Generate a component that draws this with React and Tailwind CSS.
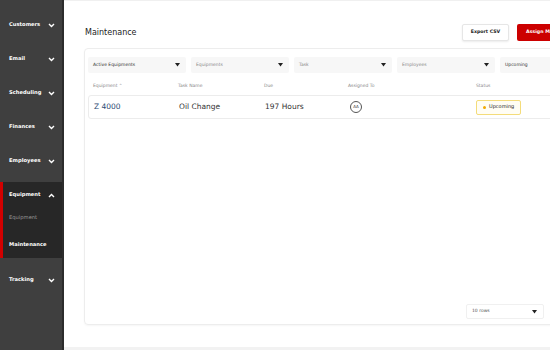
import React from "react";

const sans = { fontFamily: '"DejaVu Sans", Verdana, sans-serif' };

function Chevron({ up = false }) {
  return (
    <svg width="7" height="5" viewBox="0 0 7 5" className="shrink-0">
      <polyline
        points={up ? "1,4 3.5,1.5 6,4" : "1,1 3.5,3.5 6,1"}
        fill="none"
        stroke="#fff"
        strokeWidth="1.4"
      />
    </svg>
  );
}

function Caret() {
  return (
    <svg width="5" height="4" viewBox="0 0 5 4" className="shrink-0">
      <polygon points="0,0 5,0 2.5,3.5" fill="#222" />
    </svg>
  );
}

function NavItem({ label }) {
  return (
    <div className="flex h-[34px] items-center justify-between pl-[9px] pr-[7px]">
      <span className="text-[5.2px] font-bold text-white">{label}</span>
      <Chevron />
    </div>
  );
}

function Filter({ label, dark }) {
  return (
    <div className="flex h-[16px] w-[98px] shrink-0 items-center justify-between rounded-[2px] bg-[#f7f7f7] pl-[5px] pr-[6px]">
      <span className={`text-[4.5px] ${dark ? "text-[#333]" : "text-[#888]"}`}>{label}</span>
      <Caret />
    </div>
  );
}

export default function App() {
  const menu = ["Customers", "Email", "Scheduling", "Finances", "Employees"];

  return (
    <div className="flex h-[350px] w-[550px] overflow-hidden bg-white" style={sans}>
      <aside className="flex h-full w-[64px] shrink-0 flex-col border-r-2 border-[#2c2c2c] bg-[#3f3f3f] pt-[8px]">
        {menu.map((item) => (
          <NavItem key={item} label={item} />
        ))}
        <div className="mt-[4px] border-l-[3px] border-[#d10000] bg-[#272727]">
          <div className="flex h-[25px] items-center justify-between pl-[6px] pr-[7px] pt-[1px]">
            <span className="text-[5.2px] font-bold text-white">Equipment</span>
            <Chevron up />
          </div>
          <div className="flex h-[22px] items-center pl-[6px]">
            <span className="text-[5.2px] text-[#9a9a9a]">Equipment</span>
          </div>
          <div className="flex h-[29px] items-center pl-[6px] pt-[3px]">
            <span className="text-[5.2px] font-bold text-white">Maintenance</span>
          </div>
        </div>
        <div className="mt-[5px]">
          <NavItem label="Tracking" />
        </div>
      </aside>

      <main className="relative min-w-0 flex-1 overflow-hidden border-t border-[#f0f0f0]">
        <div className="w-[560px] pl-[20px]">
          <div className="mt-[22px] flex h-[18px] w-[513px] items-center justify-between pl-[1px]">
            <h1 className="pt-[1px] text-[8px] text-[#222]">Maintenance</h1>
            <div className="flex items-center gap-[8px]">
              <button className="h-[17px] w-[47px] rounded-[2px] border border-[#e6e6e6] bg-white text-[4.7px] font-bold text-[#222] shadow-[0_1px_2px_rgba(0,0,0,0.08)]">
                Export CSV
              </button>
              <button className="h-[17px] w-[80px] rounded-[2px] bg-[#cc0000] pl-[9px] text-left text-[4.7px] font-bold text-white">
                Assign Maintenance
              </button>
            </div>
          </div>

          <div className="mt-[7px] flex h-[277px] flex-col rounded-[4px] border border-[#ededed] px-[3px] shadow-[0_1px_2px_rgba(0,0,0,0.04)]">
            <div className="mt-[8px] flex gap-[5px]">
              <Filter label="Active Equipments" dark />
              <Filter label="Equipments" />
              <Filter label="Task" />
              <Filter label="Employees" />
              <Filter label="Upcoming" dark />
            </div>

            <div className="mt-[6px] flex h-[14px] items-center pl-[5px] text-[4.5px] text-[#888]">
              <span className="w-[85px]">Equipment ⌃</span>
              <span className="w-[86px]">Task Name</span>
              <span className="w-[84px]">Due</span>
              <span className="w-[128px]">Assigned To</span>
              <span>Status</span>
            </div>

            <div className="mt-[2px] flex h-[24px] items-center rounded-[3px] border border-[#ececec] pl-[5px] text-[7.5px] text-[#333]">
              <span className="w-[85px] text-[#2b4a72]">Z 4000</span>
              <span className="w-[86px]">Oil Change</span>
              <span className="w-[84px]">197 Hours</span>
              <span className="w-[127px] pl-[1px]">
                <span className="flex h-[12px] w-[12px] items-center justify-center rounded-full border border-[#555] text-[4px] leading-none text-[#333]">
                  AA
                </span>
              </span>
              <span className="flex h-[15px] items-center gap-[3px] rounded-[2px] border border-[#f4dc7a] bg-[#fffdf4] px-[6px] text-[5px] text-[#222]">
                <span className="h-[3px] w-[3px] rounded-full bg-[#f2a900]" />
                Upcoming
              </span>
            </div>

            <div className="mb-[5px] mt-auto flex justify-start pl-[378px]">
              <div className="flex h-[15px] w-[78px] items-center justify-between rounded-[2px] border border-[#f0f0f0] pl-[5px] pr-[6px]">
                <span className="text-[4.5px] text-[#555]">10 rows</span>
                <Caret />
              </div>
            </div>
          </div>
        </div>
        <div className="absolute bottom-0 left-0 right-0 h-[3px] bg-[#f2f2f2]" />
      </main>
    </div>
  );
}
